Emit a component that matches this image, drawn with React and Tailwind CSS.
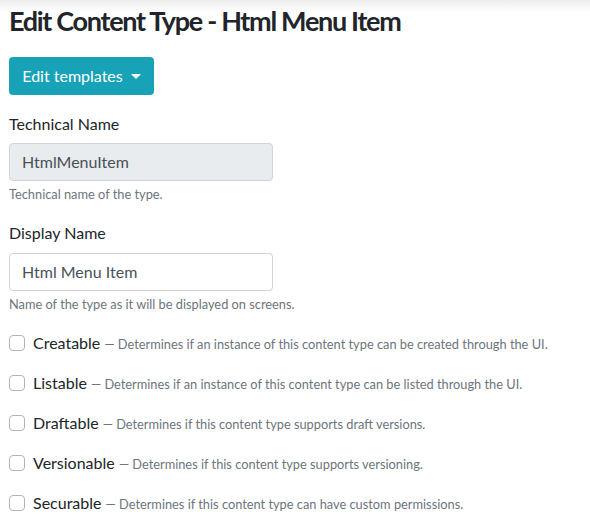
import React from "react";

const rows = [
  ["Creatable", "Determines if an instance of this content type can be created through the UI."],
  ["Listable", "Determines if an instance of this content type can be listed through the UI."],
  ["Draftable", "Determines if this content type supports draft versions."],
  ["Versionable", "Determines if this content type supports versioning."],
  ["Securable", "Determines if this content type can have custom permissions."],
];

export default function App() {
  return (
    <div className="min-h-[530px] bg-white text-[#212529]" style={{ fontFamily: 'Lato, "Noto Sans", sans-serif' }}>
      <div className="h-[12px] bg-gradient-to-b from-[#ececec] to-white" />
      <div className="px-[9px]">
        <h2 className="-mt-[10px] text-[27px] font-bold leading-[38px] tracking-[-1.3px]">Edit Content Type - Html Menu Item</h2>
        <button className="mt-[17px] flex h-[38px] w-[145px] items-center justify-center whitespace-nowrap rounded-[4px] bg-[#17a2b8] text-[16px] text-white">
          Edit templates
          <span className="ml-[8px] h-0 w-0 border-x-[5px] border-t-[5px] border-x-transparent border-t-white" />
        </button>
        <div className="mt-[17px]">
          <label className="block text-[16px] leading-[24px]">Technical Name</label>
          <div className="mt-[7px] flex h-[38px] w-[264px] items-center rounded-[4px] border border-[#ced4da] bg-[#e9ecef] px-[12px] text-[16px] text-[#495057]">HtmlMenuItem</div>
          <p className="mt-[4px] text-[12.8px] leading-[19px] text-[#6c757d]">Technical name of the type.</p>
        </div>
        <div className="mt-[17px]">
          <label className="block text-[16px] leading-[24px]">Display Name</label>
          <div className="mt-[8px] flex h-[38px] w-[264px] items-center rounded-[4px] border border-[#ced4da] bg-white px-[12px] text-[16px] text-[#495057]">Html Menu Item</div>
          <p className="mt-[4px] text-[12.8px] leading-[19px] text-[#6c757d]">Name of the type as it will be displayed on screens.</p>
        </div>
        <div className="mt-[17px] flex flex-col gap-[16px]">
          {rows.map(([name, desc]) => (
            <div key={name} className="flex h-[24px] items-center whitespace-nowrap">
              <span className="h-[16px] w-[16px] shrink-0 rounded-[4px] border border-[#adb5bd] bg-white" />
              <span className="ml-[8px] text-[16px] leading-[24px]">
                {name}{" "}
                <span className="text-[12.8px] leading-[24px] text-[#6c757d]">— {desc}</span>
              </span>
            </div>
          ))}
        </div>
      </div>
    </div>
  );
}
